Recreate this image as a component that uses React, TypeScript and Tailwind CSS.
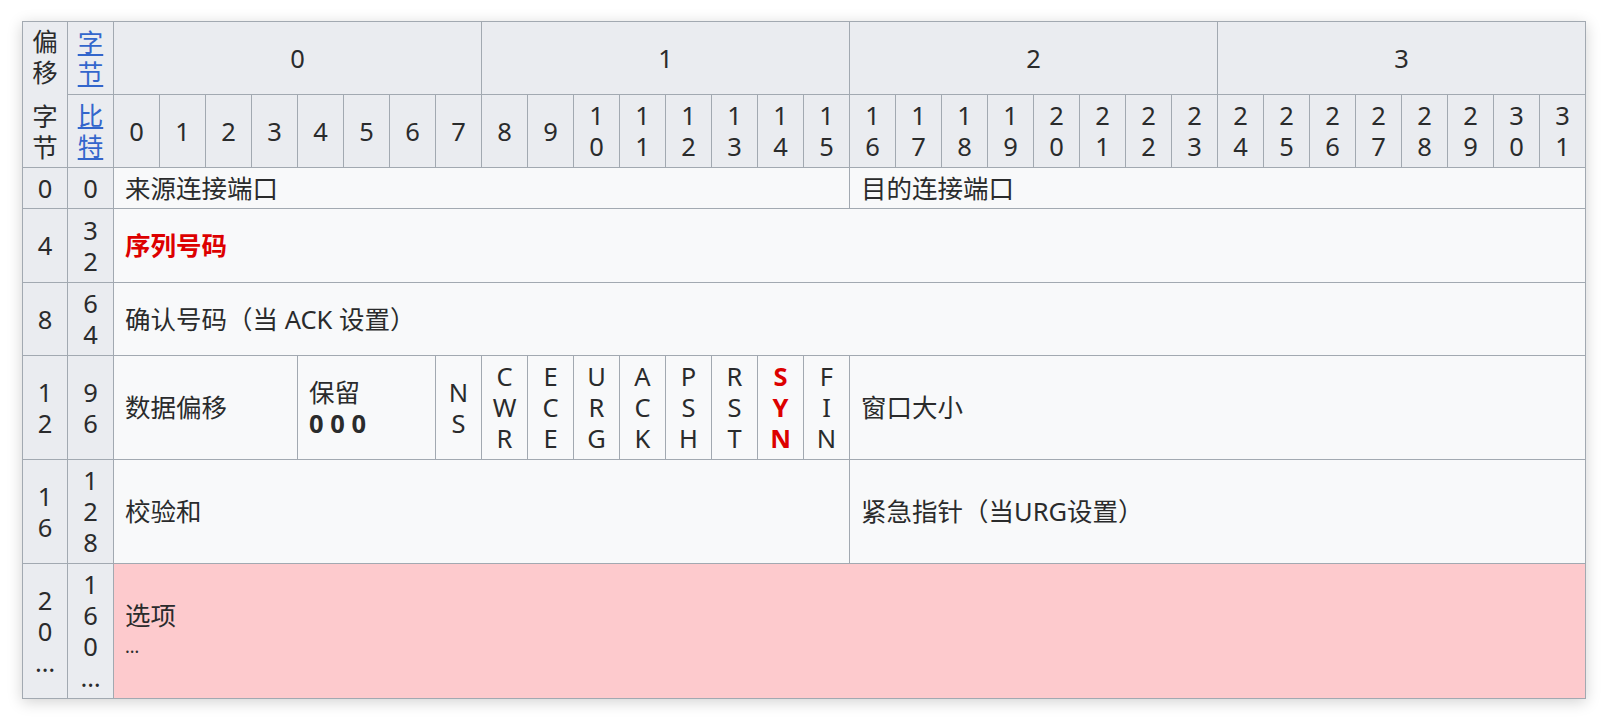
import React from 'react';

// TCP 报文段首部格式
const border = 'border-r border-b border-[#a2a9b1]';
const head = `${border} bg-[#eaecf0]`;
const body = `${border} bg-[#f8f9fa]`;

function Stack({ items, className = '' }: { items: string[]; className?: string }) {
  return (
    <div className={`flex flex-col items-center ${className}`}>
      {items.map((c, i) => (
        <span key={i}>{c}</span>
      ))}
    </div>
  );
}

function NumCell({ value, extra = '' }: { value: string; extra?: string }) {
  const items = value.split('');
  if (extra) items.push(extra);
  return (
    <div className={`${head} flex items-center justify-center`}>
      <Stack items={items} />
    </div>
  );
}

const flags = ['CWR', 'ECE', 'URG', 'ACK', 'PSH', 'RST', 'SYN', 'FIN'];

export default function App() {
  const bits = Array.from({ length: 32 }, (_, i) => String(i));

  return (
    <div className="min-h-screen bg-white pt-[21px] pl-[22px] text-[25.5px] leading-[31px] text-[#2a2b2c] font-['Noto_Sans','Noto_Sans_CJK_SC',sans-serif]">
      <div className="grid w-fit grid-cols-[45px_46px_repeat(32,46px)] grid-rows-[73px_73px_41px_74px_73px_104px_104px_135px] border-l border-t border-[#a2a9b1] shadow-[0_3px_14px_rgba(0,0,0,0.18)]">
        {/* header row 1 */}
        <div className={`${head} row-span-2 flex flex-col items-center justify-between py-[4px]`}>
          <Stack items={['偏', '移']} />
          <Stack items={['字', '节']} />
        </div>
        <div className={`${head} flex items-center justify-center`}>
          <Stack items={['字', '节']} className="text-[#3366cc] underline underline-offset-2" />
        </div>
        {['0', '1', '2', '3'].map((b) => (
          <div key={b} className={`${head} col-span-8 flex items-center justify-center`}>
            {b}
          </div>
        ))}

        {/* header row 2 */}
        <div className={`${head} flex items-center justify-center`}>
          <Stack items={['比', '特']} className="text-[#3366cc] underline underline-offset-2" />
        </div>
        {bits.map((b) => (
          <div key={b} className={`${head} flex items-center justify-center`}>
            <Stack items={b.split('')} />
          </div>
        ))}

        {/* 0 */}
        <NumCell value="0" />
        <NumCell value="0" />
        <div className={`${body} col-span-16 flex items-center pl-[11px]`}>来源连接端口</div>
        <div className={`${body} col-span-16 flex items-center pl-[11px]`}>目的连接端口</div>

        {/* 4 */}
        <NumCell value="4" />
        <NumCell value="32" />
        <div className={`${body} col-span-32 flex items-center pl-[11px] font-bold text-[#dd0000]`}>序列号码</div>

        {/* 8 */}
        <NumCell value="8" />
        <NumCell value="64" />
        <div className={`${body} col-span-32 flex items-center pl-[11px]`}>确认号码（当 ACK 设置）</div>

        {/* 12 */}
        <NumCell value="12" />
        <NumCell value="96" />
        <div className={`${body} col-span-4 flex items-center pl-[11px]`}>数据偏移</div>
        <div className={`${body} col-span-3 flex flex-col justify-center pl-[11px]`}>
          <span>保留</span>
          <span className="font-bold">0 0 0</span>
        </div>
        <div className={`${body} flex items-center justify-center`}>
          <Stack items={['N', 'S']} />
        </div>
        {flags.map((f) => (
          <div key={f} className={`${body} flex items-center justify-center`}>
            <Stack items={f.split('')} className={f === 'SYN' ? 'font-bold text-[#dd0000]' : ''} />
          </div>
        ))}
        <div className={`${body} col-span-16 flex items-center pl-[11px]`}>窗口大小</div>

        {/* 16 */}
        <NumCell value="16" />
        <NumCell value="128" />
        <div className={`${body} col-span-16 flex items-center pl-[11px]`}>校验和</div>
        <div className={`${body} col-span-16 flex items-center pl-[11px]`}>紧急指针（当URG设置）</div>

        {/* 20 */}
        <NumCell value="20" extra="…" />
        <NumCell value="160" extra="…" />
        <div className={`${border} col-span-32 flex flex-col justify-center bg-[#fdcacd] pl-[11px]`}>
          <span>选项</span>
          <span className="text-[18px]">…</span>
        </div>
      </div>
    </div>
  );
}
